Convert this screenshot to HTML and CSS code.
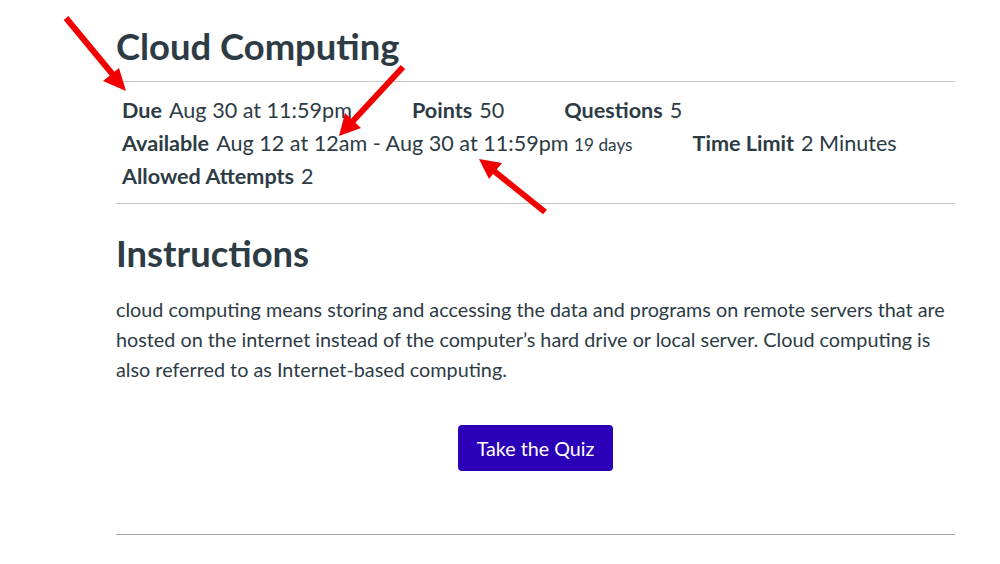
FILE: index.html
```html
<!DOCTYPE html>
<html>
<head>
<meta charset="utf-8">
<link rel="stylesheet" href="styles.css">
</head>
<body>
<div class="page">
  <h1 class="title">Cloud Computing</h1>
  <hr class="rule">
  <ul class="meta">
    <li class="item"><span class="label">Due</span><span class="val">Aug 30 at 11:59pm</span></li>
    <li class="item"><span class="label">Points</span><span class="val">50</span></li>
    <li class="item"><span class="label">Questions</span><span class="val">5</span></li>
    <li class="item"><span class="label">Available</span><span class="val">Aug 12 at 12am - Aug 30 at 11:59pm <small class="days">19 days</small></span></li>
    <li class="item"><span class="label">Time Limit</span><span class="val">2 Minutes</span></li>
    <li class="item"><span class="label">Allowed Attempts</span><span class="val">2</span></li>
  </ul>
  <hr class="rule">
  <h2 class="title2">Instructions</h2>
  <p class="desc">cloud computing means storing and accessing the data and programs on remote servers that are hosted on the internet instead of the computer’s hard drive or local server. Cloud computing is also referred to as Internet-based computing.</p>
  <div class="actions"><button class="btn">Take the Quiz</button></div>
  <hr class="rule bottom">
</div>
<svg class="arrows" width="1000" height="564" viewBox="0 0 1000 564">
  <g stroke="#f20000" stroke-width="6" stroke-linecap="butt" fill="none">
    <line x1="66" y1="18" x2="114" y2="76"/>
    <line x1="403" y1="67" x2="352" y2="122"/>
    <line x1="545" y1="212" x2="494" y2="171"/>
  </g>
  <g fill="#f20000">
    <polygon points="126,91 103,81 119,68"/>
    <polygon points="339,136 345,113 361,128"/>
    <polygon points="479,159 502,163 489,179"/>
  </g>
</svg>
</body>
</html>
```
FILE: styles.css
```css
html, body {
  margin: 0;
  padding: 0;
  background: #fff;
}
body {
  font-family: Lato, "Noto Sans", sans-serif;
  color: #2d3b45;
  position: relative;
  width: 1000px;
  height: 564px;
  overflow: hidden;
}
.page {
  margin-left: 116px;
  width: 839px;
  padding-top: 25px;
}
.title, .title2 {
  margin: 0;
  font-size: 36.4px;
  line-height: 42px;
  font-weight: 700;
}
.title {
  margin-bottom: 14px;
}
.rule {
  margin: 0;
  border: 0;
  height: 1px;
  background: #c7c7c7;
}
.rule.bottom {
  background: #a6a6a6;
  margin-top: 63px;
}
.meta {
  list-style: none;
  margin: 0;
  padding: 12px 0 10px 6px;
  display: flex;
  flex-wrap: wrap;
  column-gap: 60px;
  font-size: 21.6px;
  line-height: 33px;
}
.item {
  height: 33px;
}
.label {
  font-weight: 700;
  margin-right: 7px;
}
.days {
  font-size: 17.2px;
  line-height: 1;
}
.title2 {
  margin-top: 28px;
}
.desc {
  margin: 20px 0 0;
  font-size: 19.8px;
  line-height: 30px;
}
.actions {
  display: flex;
  justify-content: center;
  margin-top: 41px;
}
.btn {
  font-family: Lato, "Noto Sans", sans-serif;
  font-size: 19.7px;
  color: #fff;
  background: #2a00b8;
  border: 0;
  border-radius: 4px;
  width: 155px;
  height: 46px;
  padding: 0;
}
.arrows {
  position: absolute;
  left: 0;
  top: 0;
  pointer-events: none;
}
```
